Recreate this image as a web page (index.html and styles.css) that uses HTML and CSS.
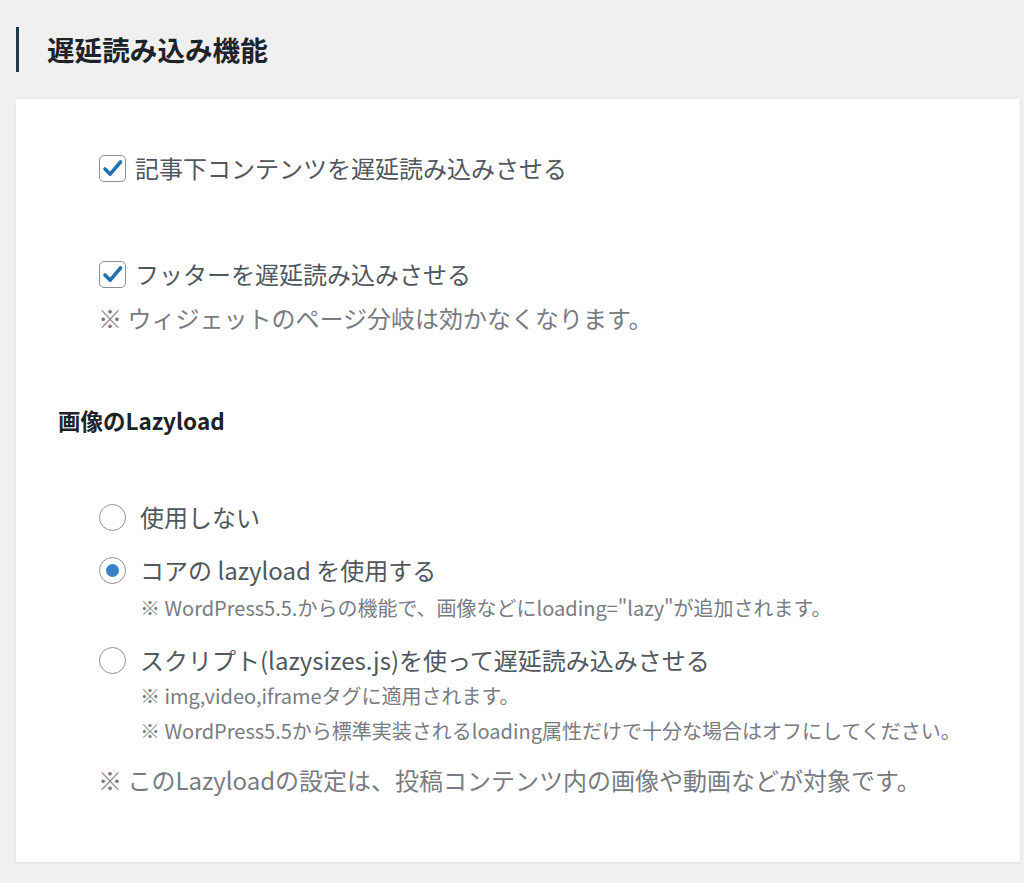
FILE: index.html
```html
<!DOCTYPE html>
<html lang="ja">
<head>
<meta charset="utf-8">
<link rel="stylesheet" href="styles.css">
</head>
<body>
<div class="page">
  <h2 class="section-title">遅延読み込み機能</h2>
  <div class="card">
    <div class="group">
      <label class="option check-1">
        <span class="checkbox"><svg viewBox="0 0 27 27" width="27" height="27"><path d="M6 14 L11.2 19.2 L21.5 7" fill="none" stroke="#2271b1" stroke-width="3.6" stroke-linecap="round" stroke-linejoin="round"/></svg></span>
        <span class="label">記事下コンテンツを遅延読み込みさせる</span>
      </label>
      <label class="option check-2">
        <span class="checkbox"><svg viewBox="0 0 27 27" width="27" height="27"><path d="M6 14 L11.2 19.2 L21.5 7" fill="none" stroke="#2271b1" stroke-width="3.6" stroke-linecap="round" stroke-linejoin="round"/></svg></span>
        <span class="label">フッターを遅延読み込みさせる</span>
      </label>
      <p class="note note-main">※ ウィジェットのページ分岐は効かなくなります。</p>
    </div>

    <h3 class="sub-title">画像のLazyload</h3>

    <div class="group radios">
      <label class="option radio-1">
        <span class="radio"></span>
        <span class="label">使用しない</span>
      </label>
      <label class="option radio-2">
        <span class="radio checked"></span>
        <span class="label">コアの lazyload を使用する</span>
      </label>
      <p class="note small n-a">※ WordPress5.5.からの機能で、画像などにloading="lazy"が追加されます。</p>
      <label class="option radio-3">
        <span class="radio"></span>
        <span class="label">スクリプト(lazysizes.js)を使って遅延読み込みさせる</span>
      </label>
      <p class="note small n-b">※ img,video,iframeタグに適用されます。</p>
      <p class="note small n-c">※ WordPress5.5から標準実装されるloading属性だけで十分な場合はオフにしてください。</p>
      <p class="note note-main n-d">※ このLazyloadの設定は、投稿コンテンツ内の画像や動画などが対象です。</p>
    </div>
  </div>
</div>
</body>
</html>
```
FILE: styles.css
```css
* { box-sizing: border-box; }
html, body {
  margin: 0;
  padding: 0;
  background: #f0f0f1;
  font-family: "Noto Sans CJK JP", "Noto Sans", sans-serif;
  color: #50575e;
}
.page {
  padding: 27px 4px 19px 16px;
  height: 883px;
}
.section-title {
  margin: 0;
  border-left: 3px solid #1e3a4c;
  padding-left: 28px;
  height: 45px;
  line-height: 45px;
  font-size: 27.6px;
  font-weight: 700;
  color: #1d2327;
}
.card {
  margin-top: 27px;
  background: #fff;
  box-shadow: 0 1px 3px rgba(0,0,0,0.08);
  padding: 51px 0 64px 42px;
  height: 763px;
}
.group {
  padding-left: 40px;
  display: flex;
  flex-direction: column;
}
.option {
  display: flex;
  align-items: center;
  height: 36px;
  font-size: 24px;
  line-height: 36px;
}
.checkbox {
  width: 27px;
  height: 27px;
  border: 1.5px solid #8c8f94;
  border-radius: 5px;
  background: #fff;
  display: flex;
  align-items: center;
  justify-content: center;
  margin-left: 1px;
  margin-right: 9px;
  flex: none;
  overflow: hidden;
}
.checkbox svg { flex: none; }
.check-2 { margin-top: 70px; }
.note {
  margin: 0;
  color: #787c82;
}
.note-main {
  font-size: 24px;
  line-height: 36px;
  margin-top: 8px;
}
.sub-title {
  margin: 66px 0 0 0;
  font-size: 22.5px;
  line-height: 36px;
  font-weight: 700;
  color: #1d2327;
}
.radios { margin-top: 59px; }
.radio {
  width: 27px;
  height: 27px;
  border: 1.5px solid #8c8f94;
  border-radius: 50%;
  background: #fff;
  margin-left: 1px;
  margin-right: 14px;
  display: flex;
  align-items: center;
  justify-content: center;
  flex: none;
}
.radio.checked::after {
  content: "";
  width: 13px;
  height: 13px;
  border-radius: 50%;
  background: #3582c4;
}
.radio-1 { margin-top: 2px; }
.radio-2 { margin-top: 17px; }
.small {
  font-size: 20px;
  line-height: 30px;
  padding-left: 42px;
}
.n-a { margin-top: 5px; }
.radio-3 { margin-top: 19px; }
.n-b { margin-top: 3px; }
.n-c { margin-top: 5px; }
.n-d { margin-top: 16px; }
```
